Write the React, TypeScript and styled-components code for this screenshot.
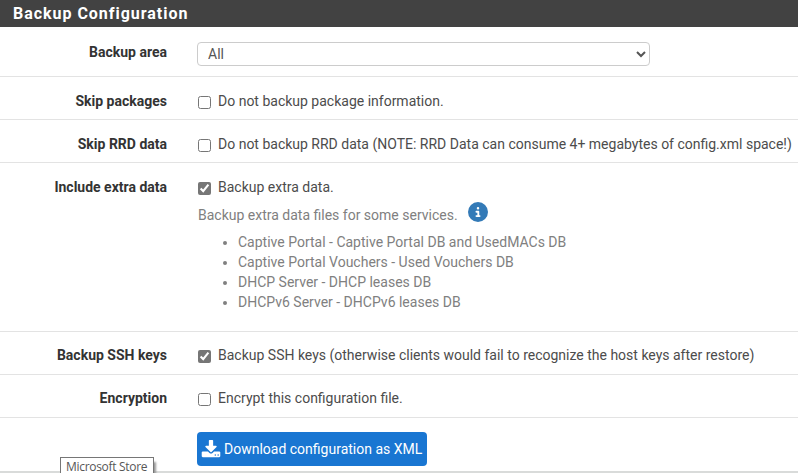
import React from 'react';
import styled, { createGlobalStyle } from 'styled-components';
import { FaCircleInfo } from 'react-icons/fa6';

const GlobalStyle = createGlobalStyle`
  * { box-sizing: border-box; }
  html, body { margin: 0; background: #fff; overflow: hidden; }
  body { font: 14px/20px Roboto, "Liberation Sans", sans-serif; color: #4c4c4c; }
`;

const Page = styled.main`
  position: relative;
  width: 798px;
  height: 473px;
  overflow: hidden;
`;

const Panel = styled.section`
  border-bottom: 2px solid #d9dbda;
`;

const Heading = styled.h2`
  margin: 0;
  height: 27px;
  padding-left: 13px;
  background: #424242;
  color: #fff;
  font-size: 16px;
  font-weight: 700;
  line-height: 27px;
  letter-spacing: 0.97px;
`;

const Row = styled.div<{ $height: number; $top?: number }>`
  display: grid;
  grid-template-columns: 167px 1fr;
  column-gap: 30px;
  height: ${(p) => p.$height}px;
  border-bottom: 1px solid #e3e3e3;
  padding-top: ${(p) => p.$top ?? 14}px;
  &:last-child { border-bottom: 0; }
`;

const Label = styled.div`
  text-align: right;
  font-weight: 700;
  color: #333;
  white-space: nowrap;
`;

const Field = styled.div`
  min-width: 0;
  white-space: nowrap;
`;

const Select = styled.select`
  display: block;
  width: 453px;
  height: 24px;
  padding: 0 0 0 6px;
  border: 1px solid #ccc;
  border-radius: 4px;
  background-color: #fff;
  color: #555;
  font: 14px Roboto, "Liberation Sans", sans-serif;
`;

const Check = styled.label`
  display: flex;
  height: 20px;
`;

const Box = styled.input`
  flex: none;
  width: 13px;
  height: 13px;
  margin: 5px 7px 0 1px;
  accent-color: #767676;
`;

const Help = styled.div`
  display: flex;
  height: 20px;
  margin: 8px 0 7px 1px;
  color: #808080;
`;

const InfoIcon = styled(FaCircleInfo)`
  flex: none;
  width: 20px;
  height: 20px;
  margin: -3px 0 0 10px;
  color: #337ab7;
`;

const List = styled.ul`
  margin: 0;
  padding-left: 41px;
  color: #808080;
`;

const Button = styled.button`
  display: flex;
  align-items: center;
  width: 230px;
  height: 34px;
  padding: 0 0 0 4px;
  gap: 3px;
  border: 0;
  border-radius: 4px;
  background: #1976d2;
  color: #fff;
  font: 400 14px Roboto, "Liberation Sans", sans-serif;
  white-space: nowrap;
`;

const DownloadIcon = styled.svg`
  flex: none;
  width: 20px;
  height: 20px;
  margin-top: 2px;
  fill: #fff;
`;

const Tooltip = styled.div`
  position: absolute;
  left: 60px;
  top: 457px;
  width: 94px;
  height: 22px;
  padding-left: 5px;
  border: 1px solid #767676;
  background: #fff;
  box-shadow: 3px 4px 2px -1px #999;
  color: #575757;
  font: 12px/18px "Open Sans", "Noto Sans", sans-serif;
  letter-spacing: -0.3px;
  white-space: nowrap;
`;

type OptionProps = { label: string; text: string; checked?: boolean; height?: number; top?: number; children?: React.ReactNode };

const Option = ({ label, text, checked, height = 43, top, children }: OptionProps) => (
  <Row $height={height} $top={top}>
    <Label>{label}</Label>
    <Field>
      <Check>
        <Box type="checkbox" defaultChecked={checked} />
        <span>{text}</span>
      </Check>
      {children}
    </Field>
  </Row>
);

const services = [
  'Captive Portal - Captive Portal DB and UsedMACs DB',
  'Captive Portal Vouchers - Used Vouchers DB',
  'DHCP Server - DHCP leases DB',
  'DHCPv6 Server - DHCPv6 leases DB',
];

export default function App() {
  return (
    <Page>
      <GlobalStyle />
      <Panel>
        <Heading>Backup Configuration</Heading>
        <Row $height={50} $top={15}>
          <Label>Backup area</Label>
          <Field>
            <Select defaultValue="all"><option value="all">All</option></Select>
          </Field>
        </Row>
        <Option label="Skip packages" text="Do not backup package information." />
        <Option label="Skip RRD data" text="Do not backup RRD data (NOTE: RRD Data can consume 4+ megabytes of config.xml space!)" />
        <Option label="Include extra data" text="Backup extra data." checked height={169}>
          <Help>
            Backup extra data files for some services.
            <InfoIcon />
          </Help>
          <List>
            {services.map((s) => <li key={s}>{s}</li>)}
          </List>
        </Option>
        <Option label="Backup SSH keys" text="Backup SSH keys (otherwise clients would fail to recognize the host keys after restore)" checked top={13} />
        <Option label="Encryption" text="Encrypt this configuration file." top={13} />
        <Row $height={53}>
          <Label />
          <Field>
            <Button>
              <DownloadIcon viewBox="0 0 1792 1792">
                <path d="M1344 1344q0-26-19-45t-45-19-45 19-19 45 19 45 45 19 45-19 19-45zm256 0q0-26-19-45t-45-19-45 19-19 45 19 45 45 19 45-19 19-45zm128-224v320q0 40-28 68t-68 28h-1472q-40 0-68-28t-28-68v-320q0-40 28-68t68-28h465l135 136q58 56 136 56t136-56l136-136h464q40 0 68 28t28 68zm-325-569q17 41-14 70l-448 448q-18 19-45 19t-45-19l-448-448q-31-29-14-70 17-39 59-39h256v-448q0-26 19-45t45-19h256q26 0 45 19t19 45v448h256q42 0 59 39z" />
              </DownloadIcon>
              Download configuration as XML
            </Button>
          </Field>
        </Row>
      </Panel>
      <Tooltip>Microsoft Store</Tooltip>
    </Page>
  );
}
